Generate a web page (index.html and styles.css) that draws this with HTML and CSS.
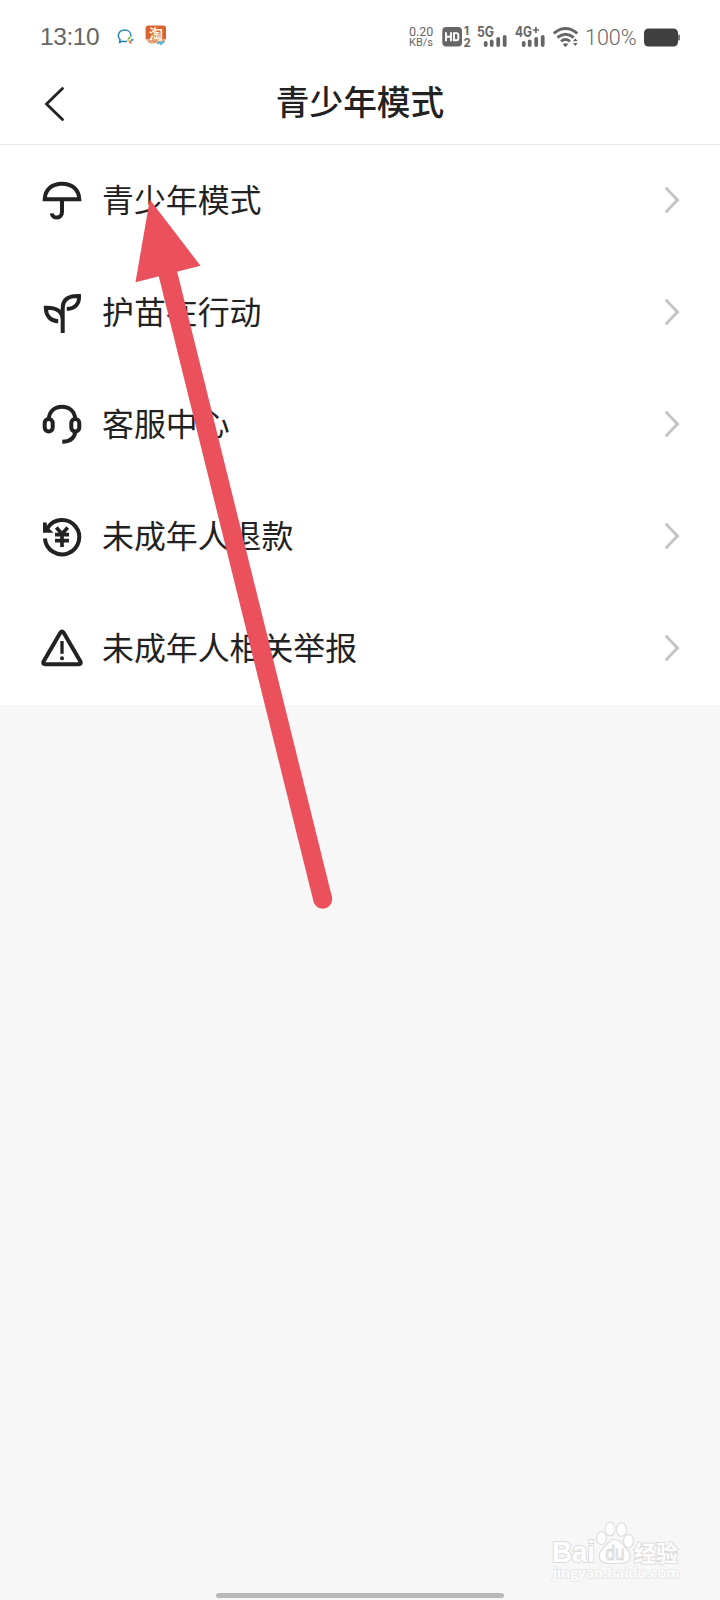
FILE: index.html
```html
<!DOCTYPE html>
<html lang="zh-CN">
<head>
    <meta charset="UTF-8">
    <meta name="viewport" content="width=device-width, initial-scale=1.0">
    <title>青少年模式</title>
    <link rel="stylesheet" href="styles.css">
</head>
<body>
    <!-- 状态栏 -->
    <div class="status-bar">
        <div class="status-left">
            <span class="time">13:10</span>
            <svg class="chat-icon" width="18" height="16" viewBox="0 0 18 16" fill="none" stroke-width="1.5" stroke-linecap="round">
                <path d="M3 10.800C-.6 6 2.400 1 7.500 1c4 0 6.500 2.700 6.500 6" stroke="#2c8ac0"/>
                <path d="M3 10.800l-.4 2.500 2.800-1.100c1.400.4 2.800.4 4.100.1" stroke="#247fb0"/>
                <path d="M12.800 8.500l-1.400 1.400" stroke="#7fc25a" stroke-width="2"/>
                <path d="M15.500 10.600l-1 .8" stroke="#4a8fc9" stroke-width="2"/>
                <path d="M13.500 13.600l-.6-.8" stroke="#e6674d" stroke-width="2"/>
                <path d="M11.200 11.300l.7.5" stroke="#efce45" stroke-width="2"/>
            </svg>
            <svg class="shop-icon" width="22" height="21" viewBox="0 0 22 21">
                <path d="M3 .5h15.500a2.500 2.500 0 0 1 2.500 2.500v11H.6V3A2.500 2.500 0 0 1 3 .5z" fill="#dc6331"/>
                <path d="M.8 14h20l-2 3.500-4 1.500-4-1-4 1-4-2z" fill="#eeb08b"/>
                <path d="M4 17l3-2 3 2 3-2 2 2" fill="none" stroke="#d78658" stroke-width="1.200"/>
                <path d="M12 18.600l3-1.200 1 1.600 3.500-3" fill="none" stroke="#58b5dc" stroke-width="1.900"/>
                <text x="4" y="13.500" class="shop-text">淘</text>
            </svg>
        </div>
        <div class="status-right">
            <div class="speed"><span>0.20</span><span class="unit">KB/s</span></div>
            <svg class="hd-icon" width="30" height="22" viewBox="0 0 30 22">
                <rect x=".3" y="1" width="19.700" height="19.500" rx="4" fill="#666"/>
                <path d="M4 6.200v9M9 6.200v9M4 10.700h5M12 7.100v7.200h2.500q1.800 0 1.800-2V9.100q0-2-1.800-2z" fill="none" stroke="#fff" stroke-width="1.900"/>
                <text x="22" y="9" class="net-small">1</text>
                <text x="21.500" y="20.500" class="net-small">2</text>
            </svg>
            <svg class="net-icon" width="32" height="22" viewBox="0 0 32 22">
                <text x="0" y="10.500" class="net-text" textLength="17" lengthAdjust="spacingAndGlyphs">5G</text>
                <path d="M8.700 17v2M14.700 15.500v3.500M21.200 13v6M27.700 11v8" stroke="#666" stroke-width="3.800" stroke-linecap="round"/>
            </svg>
            <svg class="net-icon" width="32" height="22" viewBox="0 0 32 22">
                <text x="0" y="10.500" class="net-text" textLength="17" lengthAdjust="spacingAndGlyphs">4G</text>
                <path d="M17.800 4h6.200M20.900 1v6" stroke="#666" stroke-width="1.700"/>
                <path d="M8.700 17v2M14.700 15.500v3.500M21.200 13v6M27.700 11v8" stroke="#666" stroke-width="3.800" stroke-linecap="round"/>
            </svg>
            <svg class="wifi-icon" width="26" height="21" viewBox="0 0 26 21">
                <path d="M.8 6.300Q12.500-3.200 24.300 6.300M4.500 10.500q8-6.600 16.200 0M8 14.300q4.500-3.600 9 0" fill="none" stroke="#666" stroke-width="3"/>
                <path d="M9.700 17q2.800-1.600 5.600 0l-2.800 3.200zM20 14.200l2.300-3 2.300 3zM20 16l2.300 3 2.300-3z" fill="#666"/>
            </svg>
            <span class="battery-text">100%</span>
            <svg class="battery-icon" width="36" height="19" viewBox="0 0 36 19">
                <rect x="0" y=".5" width="34" height="18" rx="4.500" fill="#404040"/>
                <path d="M34 6.500h.7q1.300 0 1.300 1.300v3.400q0 1.300-1.300 1.300H34z" fill="#777"/>
            </svg>
        </div>
    </div>

    <!-- 标题栏 -->
    <header class="nav-bar">
        <svg class="back-icon" width="22" height="36" viewBox="0 0 22 36">
            <path d="M18.500 2.500L2.500 18l16 15.500" fill="none" stroke="#222" stroke-width="2.800" stroke-linecap="round"/>
        </svg>
        <h1>青少年模式</h1>
    </header>

    <!-- 功能列表 -->
    <main class="menu">
        <div class="menu-item">
            <svg class="item-icon" viewBox="0 0 44 44">
                <path d="M4.700 20.300C5.200 10.500 12 4.700 22 4.700s16.800 5.800 17.300 15.600zM22 20.300v12.700c0 7-9.800 7.300-10.200 1.300"/>
            </svg>
            <span class="label">青少年模式</span>
            <svg class="chevron" viewBox="0 0 16 28"><path d="M2.500 2.500L13.500 14l-11 11.500"/></svg>
        </div>
        <div class="menu-item">
            <svg class="item-icon" viewBox="0 0 44 44">
                <path d="M22.700 42V17.500C22.700 8 29 4.500 39 5c.6 8-4.200 12.600-12.200 13M22.700 29C22.700 20 16 16.500 5.800 16.800c.2 8 4.300 13.200 12.400 13.500"/>
            </svg>
            <span class="label">护苗在行动</span>
            <svg class="chevron" viewBox="0 0 16 28"><path d="M2.500 2.500L13.500 14l-11 11.500"/></svg>
        </div>
        <div class="menu-item">
            <svg class="item-icon" viewBox="0 0 44 44">
                <rect x="4.700" y="16" width="8" height="12.400" rx="4"/>
                <rect x="31.300" y="16" width="8" height="12.400" rx="4"/>
                <path d="M8.700 16.500C9 8.500 14.500 3.700 22 3.700s13 4.800 13.300 12.800M35.300 27.500C35 35 31 38.600 22.300 38.700"/>
            </svg>
            <span class="label">客服中心</span>
            <svg class="chevron" viewBox="0 0 16 28"><path d="M2.500 2.500L13.500 14l-11 11.500"/></svg>
        </div>
        <div class="menu-item">
            <svg class="item-icon" viewBox="0 0 44 44">
                <path d="M7.500 13A17.200 17.200 0 1 1 4.900 23.500"/>
                <path d="M3 7.500v10.200h10.500l-4.500-4.500-2.200-1V7.500z" fill="#222" stroke="none"/>
                <path d="M16.300 12.500l5.700 6.400 5.700-6.400M15 19.700h14M15 25.700h14M22 18.500v13.500" stroke-width="3.700"/>
            </svg>
            <span class="label">未成年人退款</span>
            <svg class="chevron" viewBox="0 0 16 28"><path d="M2.500 2.500L13.500 14l-11 11.500"/></svg>
        </div>
        <div class="menu-item">
            <svg class="item-icon" viewBox="0 0 44 44">
                <path d="M20.300 5.700q1.700-2.200 3.400 0l16.900 29q.8 2.500-1.800 2.600H5.200q-2.600-.1-1.800-2.600z" stroke-linejoin="round"/>
                <path d="M22 14v12.800" stroke-width="3.300"/>
                <circle cx="22" cy="31.300" r="2" fill="#222" stroke="none"/>
            </svg>
            <span class="label">未成年人相关举报</span>
            <svg class="chevron" viewBox="0 0 16 28"><path d="M2.500 2.500L13.500 14l-11 11.500"/></svg>
        </div>
    </main>

    <!-- 指示箭头 -->
    <svg class="arrow" width="720" height="920" viewBox="0 0 720 920">
        <path d="M167 270L322.700 899.300" stroke="#ea515d" stroke-width="19" stroke-linecap="butt"/>
        <circle cx="322.700" cy="899.300" r="9.500" fill="#ea515d"/>
        <path d="M149.800 199.500L200.500 265.700L135.500 282.300z" fill="#ea515d"/>
    </svg>

    <!-- 水印 -->
    <svg class="watermark" width="136" height="70" viewBox="0 0 136 70">
        <g class="mark">
            <text x="2" y="46" class="mark-main" textLength="43" lengthAdjust="spacingAndGlyphs">Bai</text>
            <ellipse cx="51.500" cy="22" rx="5" ry="6.500"/>
            <ellipse cx="60" cy="13" rx="5" ry="6.800"/>
            <ellipse cx="71.500" cy="13.500" rx="5" ry="6.800"/>
            <ellipse cx="78.500" cy="25" rx="5" ry="6.500"/>
            <path d="M65 23.500c5 0 6.500 4 10 7.500 4 4 6 6.500 5 11-1.500 6-8 5.500-15 5.500s-14 .5-15.500-5.500c-1-4.500 1-7 5-11 3.500-3.500 5-7.500 10.500-7.500z"/>
            <text x="55.500" y="44" class="mark-du" textLength="19" lengthAdjust="spacingAndGlyphs">du</text>
            <text x="84" y="45" class="mark-cn" textLength="44">经验</text>
            <text x="3" y="62" class="mark-url" textLength="127" lengthAdjust="spacingAndGlyphs">jingyan.baidu.com</text>
        </g>
    </svg>

    <div class="home-bar"></div>
</body>
</html>
```

FILE: styles.css
```css
* {
    box-sizing: border-box;
}

body {
    position: relative;
    margin: 0;
    height: 1600px;
    overflow: hidden;
    background: #f7f7f7;
    color: #222;
    font-family: Roboto, "Noto Sans CJK SC", sans-serif;
}

svg {
    display: block;
    flex-shrink: 0;
    overflow: visible;
}

.status-bar {
    display: flex;
    justify-content: space-between;
    height: 74px;
    padding: 0 40px;
    background: #fff;
    color: #666;
}

.status-left,
.status-right {
    display: flex;
    align-items: center;
}

.time {
    width: 77px;
    font-family: "Liberation Sans", sans-serif;
    font-size: 24.5px;
    letter-spacing: -0.4px;
}

.shop-icon {
    margin-left: 10px;
    margin-top: -3px;
}

.shop-text {
    font-family: "Noto Sans CJK SC", sans-serif;
    font-size: 14px;
    font-weight: 700;
    fill: #fff4d8;
}

.speed {
    display: flex;
    flex-direction: column;
    width: 33px;
    font-size: 12.5px;
    line-height: 11px;
}

.speed .unit {
    font-size: 11px;
}

.hd-icon {
    margin-right: 5px;
}

.net-icon {
    margin-right: 6px;
}

.net-small {
    font-family: Inter, sans-serif;
    font-size: 11.5px;
    font-weight: 700;
    fill: #666;
}

.net-text {
    font-family: Inter, sans-serif;
    font-size: 14px;
    font-weight: 700;
    fill: #666;
}

.wifi-icon {
    margin-right: 6px;
}

.battery-text {
    width: 59px;
    font-size: 21.5px;
    font-weight: 300;
}

.nav-bar {
    display: grid;
    grid-template-columns: 100px 1fr 100px;
    align-items: center;
    height: 71px;
    background: #fff;
    border-bottom: 1px solid #e9e9e9;
}

.back-icon {
    margin-left: 44px;
    margin-top: -11px;
}

.nav-bar h1 {
    margin: -11px 0 0;
    text-align: center;
    font-size: 33.7px;
    line-height: 50px;
    font-weight: 500;
}

.menu {
    height: 560px;
    background: #fff;
}

.menu-item {
    display: flex;
    align-items: center;
    height: 112px;
    padding: 0 40px 2px;
}

.item-icon {
    width: 44px;
    height: 44px;
    margin-top: 2px;
    fill: none;
    stroke: #222;
    stroke-width: 4;
}

.label {
    flex: 1;
    padding-left: 18px;
    margin-top: -4px;
    font-size: 31.9px;
}

.chevron {
    width: 16px;
    height: 28px;
    fill: none;
    stroke: #c4c4c4;
    stroke-width: 3;
    stroke-linecap: round;
}

.arrow {
    position: absolute;
    top: 0;
    left: 0;
}

.watermark {
    position: absolute;
    right: 34px;
    bottom: 14px;
}

.mark {
    fill: #fff;
    stroke: #dcdcdc;
    stroke-width: 1.1;
    font-family: "Open Sans", "Noto Sans CJK SC", sans-serif;
    font-weight: 700;
}

.mark-main {
    font-family: "Liberation Sans", sans-serif;
    font-size: 29px;
    paint-order: stroke;
    stroke-width: 2;
}

.mark-du {
    font-family: "Liberation Sans", sans-serif;
    font-size: 20px;
    font-weight: 400;
    fill: #f4f4f4;
}

.mark-cn {
    font-size: 22px;
    paint-order: stroke;
    stroke-width: 2;
}

.mark-url {
    font-size: 14px;
    font-weight: 600;
    paint-order: stroke;
    stroke: #e6e6e6;
    stroke-width: 1.6;
}

.home-bar {
    position: absolute;
    left: 216px;
    bottom: 2px;
    width: 288px;
    height: 5px;
    border-radius: 3px;
    background: #b9b9b9;
}
```
